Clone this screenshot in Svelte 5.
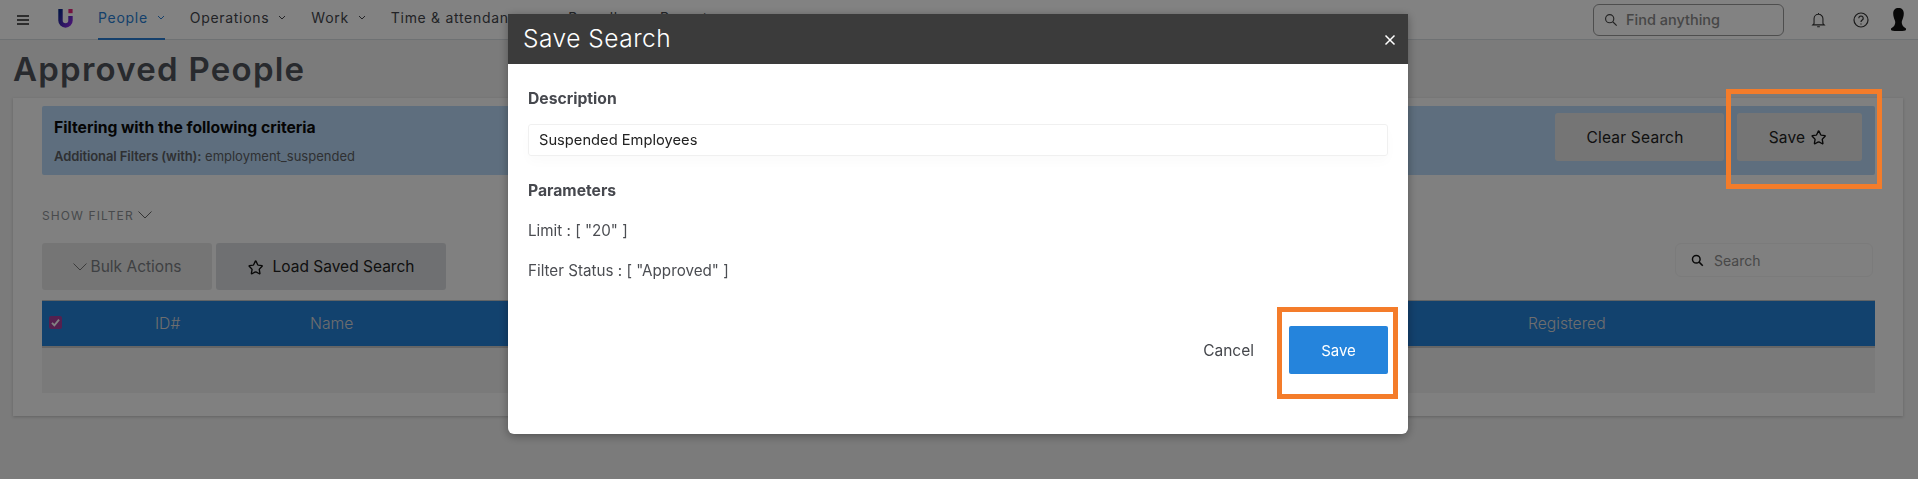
<script>
  const nav = [
    { label: 'People', active: true },
    { label: 'Operations' },
    { label: 'Work' },
    { label: 'Time & attendance' },
    { label: 'Payroll' },
    { label: 'Reports' }
  ]
  const params = ['Limit : [ "20" ]', 'Filter Status : [ "Approved" ]']
  const star = 'M12 3.2l2.5 5.3c.2.3.4.5.8.6l5.6.8c.5.1.7.7.3 1l-4 4c-.3.2-.4.6-.3.9l1 5.7c.1.5-.4.9-.9.6l-5-2.7c-.3-.2-.7-.2-1 0l-5 2.7c-.5.3-1-.1-.9-.6l1-5.7c.1-.3 0-.7-.3-.9l-4-4c-.4-.3-.2-.9.3-1l5.6-.8c.4-.1.6-.3.8-.6l2.5-5.3c.2-.5.8-.5 1 0z'
</script>

<div class="page">
  <header class="topbar">
    <svg class="burger" viewBox="0 0 12 10"><path d="M0 1h12M0 5h12M0 9h12" /></svg>
    <svg class="logo" viewBox="0 0 15 19">
      <defs>
        <linearGradient id="u" x1="0" y1="0" x2="1" y2="1">
          <stop offset="0" stop-color="#0a2a8c" />
          <stop offset="1" stop-color="#8a2be2" />
        </linearGradient>
      </defs>
      <path d="M2.5 0v11.5a5 5 0 0 0 10 0V7" fill="none" stroke="url(#u)" stroke-width="4.4" />
      <rect x="10.4" y="0" width="4.2" height="4.2" fill="#e5267c" />
    </svg>
    <nav>
      {#each nav as item}
        <a href="#top" class:active={item.active}>
          {item.label}
          <svg viewBox="0 0 8 5"><path d="M1 1l3 3 3-3" /></svg>
        </a>
      {/each}
    </nav>
    <div class="find">
      <svg viewBox="0 0 16 16"><circle cx="6.5" cy="6.5" r="4.7" /><path d="M10 10l4.5 4.5" /></svg>
      <span>Find anything</span>
    </div>
    <svg class="tool" viewBox="0 0 16 18">
      <path d="M3 13V7.5a5 5 0 0 1 10 0V13l1.5 1.5h-13zM6.5 16.5h3M8 1v1.5" />
    </svg>
    <svg class="tool help" viewBox="0 0 16 16">
      <circle cx="8" cy="8" r="7" />
      <path d="M5.8 6.2a2.2 2.2 0 1 1 3.4 1.9c-.8.5-1.2 1-1.2 1.9M8 11.6v1" />
    </svg>
    <svg class="avatar" viewBox="0 0 15 23">
      <path d="M7.5 0c3.400 0 5.300 2 5.300 5.500 0 2.700-.9 5-1.700 6.900-.6 1.500-.4 3.300.4 4.900.7 1.400 2.100 2.200 3.500 3.200.5.400.2 1.500-.6 1.900-1.700.5-4 .6-6.900.6s-5.200-.1-6.900-.6c-.8-.4-1.100-1.500-.6-1.900 1.400-1 2.800-1.800 3.500-3.200.8-1.600 1-3.400.4-4.900-.8-1.900-1.700-4.200-1.700-6.900C2.200 2 4.100 0 7.500 0z" />
    </svg>
  </header>

  <h1>Approved People</h1>

  <section class="card">
    <div class="alert">
      <div class="alert-text">
        <h2>Filtering with the following criteria</h2>
        <p><b>Additional Filters (with):</b> employment_suspended</p>
      </div>
      <button class="grey clear">Clear Search</button>
      <button class="grey save-top">
        Save
        <svg class="star" viewBox="0 0 24 24"><path d={star} /></svg>
      </button>
    </div>

    <div class="show-filter">
      SHOW FILTER
      <svg viewBox="0 0 14 8"><path d="M.5.5L7 7 13.500.5" /></svg>
    </div>

    <div class="actions">
      <button class="grey bulk">
        <svg viewBox="0 0 14 8"><path d="M.5.5L7 7 13.500.5" /></svg>
        Bulk Actions
      </button>
      <button class="grey load">
        <svg class="star" viewBox="0 0 24 24"><path d={star} /></svg>
        Load Saved Search
      </button>
      <div class="table-search">
        <svg viewBox="0 0 16 16"><circle cx="6.5" cy="6.5" r="4.7" /><path d="M10 10l4.500 4.500" /></svg>
        <span>Search</span>
      </div>
    </div>

    <div class="thead">
      <span class="check">
        <svg viewBox="0 0 14 14"><path d="M3.200 7.300l2.600 2.700 5-6" /></svg>
      </span>
      <span>ID#</span>
      <span>Name</span>
      <span>Registered</span>
    </div>
    <div class="empty-row"></div>
  </section>
</div>

<div class="backdrop"></div>

<div class="dialog">
  <div class="dialog-head">
    <h3>Save Search</h3>
    <svg viewBox="0 0 12 12"><path d="M1.500 1.500l9 9M10.500 1.500l-9 9" /></svg>
  </div>
  <div class="dialog-body">
    <h4>Description</h4>
    <div class="input">Suspended Employees</div>
    <h4 class="params">Parameters</h4>
    {#each params as line}
      <p>{line}</p>
    {/each}
    <div class="dialog-foot">
      <span class="cancel">Cancel</span>
      <button class="primary">Save</button>
    </div>
  </div>
</div>

<div class="mark mark-top"></div>
<div class="mark mark-dialog"></div>

<style>
  :global(body) {
    margin: 0;
    background: #f1f1f1;
    font-family: Inter, "Open Sans", sans-serif;
    overflow: hidden;
  }
  .page {
    height: 479px;
    color: #3f4248;
  }
  .topbar {
    display: flex;
    align-items: center;
    height: 39px;
    background: #fff;
    border-bottom: 1px solid #d8dde2;
  }
  .burger {
    width: 12px;
    height: 10px;
    margin-left: 17px;
    fill: none;
    stroke: #222;
    stroke-width: 1.500;
  }
  .logo {
    width: 15px;
    height: 19px;
    margin-left: 29px;
    margin-top: -2px;
  }
  nav {
    display: flex;
    align-self: stretch;
    gap: 25px;
    margin-left: 25px;
  }
  nav a {
    display: flex;
    align-items: center;
    gap: 9px;
    padding-bottom: 3px;
    font-size: 14px;
    letter-spacing: 0.7px;
    font-weight: 400;
    color: #43464c;
    text-decoration: none;
    white-space: nowrap;
    border-bottom: 2px solid transparent;
    box-sizing: border-box;
    height: 40px;
  }
  nav a.active {
    color: #2a7fd4;
    border-bottom-color: #2a7fd4;
  }
  nav a svg {
    width: 8px;
    height: 5px;
    fill: none;
    stroke: currentColor;
    stroke-width: 1;
  }
  .find {
    display: flex;
    align-items: center;
    gap: 8px;
    box-sizing: border-box;
    width: 191px;
    height: 32px;
    margin-left: auto;
    padding-left: 10px;
    border: 1px solid #9a9a9a;
    border-radius: 6px;
    font-size: 14.500px;
    font-weight: 500;
    color: #8a8a8a;
  }
  .find svg {
    width: 14px;
    height: 14px;
    fill: none;
    stroke: #444;
    stroke-width: 1.300;
  }
  .tool {
    width: 15px;
    height: 16px;
    margin-left: 27px;
    fill: none;
    stroke: #333;
    stroke-width: 1.200;
  }
  .help {
    width: 16px;
    height: 16px;
    margin-left: 27px;
  }
  .avatar {
    width: 15px;
    height: 23px;
    margin-left: 22px;
    margin-right: 12px;
    fill: #111;
  }
  h1 {
    margin: 0;
    padding: 10px 0 0 13px;
    height: 48px;
    box-sizing: border-box;
    font-size: 33px;
    line-height: 38px;
    font-weight: 600;
    letter-spacing: 1.250px;
    color: #4f535a;
  }
  .card {
    box-sizing: border-box;
    width: 1890px;
    height: 318px;
    margin: 10px 0 0 13px;
    padding: 8px 28px 0 29px;
    background: #fbfbfb;
    box-shadow: 0 1px 3px rgba(0, 0, 0, 0.2);
  }
  .alert {
    display: flex;
    align-items: flex-start;
    gap: 13px;
    box-sizing: border-box;
    height: 69px;
    padding: 7px 13px 0 12px;
    background: #b8d8f7;
    border-radius: 2px;
  }
  .alert-text {
    flex: 1;
    padding-top: 5px;
  }
  h2 {
    margin: 0 0 10px;
    font-size: 15.700px;
    line-height: 20px;
    font-weight: 700;
    color: #0a0a0a;
  }
  .alert p {
    margin: 0;
    font-size: 13px;
    line-height: 16px;
    color: #5c5f64;
  }
  .alert b {
    font-weight: 600;
    letter-spacing: -0.1px;
  }
  button {
    font: inherit;
    border: 0;
    cursor: pointer;
  }
  .grey {
    display: flex;
    align-items: center;
    justify-content: center;
    height: 48px;
    background: #e6e6e6;
    color: #222;
    font-size: 15.500px;
    border-radius: 3px;
  }
  .alert .clear {
    width: 169px;
    padding-right: 15px;
    letter-spacing: 0.2px;
  }
  .alert .save-top {
    width: 125px;
    gap: 6px;
    padding-right: 9px;
    letter-spacing: 0.2px;
  }
  .star {
    width: 16px;
    height: 16px;
    fill: none;
    stroke: #111;
    stroke-width: 2;
  }
  .show-filter {
    display: flex;
    align-items: center;
    gap: 4px;
    margin-top: 32px;
    height: 16px;
    font-size: 12px;
    letter-spacing: 1.100px;
    color: #8d9296;
  }
  .show-filter svg {
    width: 14px;
    height: 8px;
    fill: none;
    stroke: #666;
    stroke-width: 1;
  }
  .actions {
    display: flex;
    gap: 4px;
    margin-top: 20px;
    height: 47px;
    margin-bottom: 10px;
  }
  .actions .grey {
    height: 47px;
    font-size: 15.500px;
  }
  .bulk {
    width: 170px;
    gap: 4px;
    color: #7b7e83 !important;
  }
  .bulk svg {
    width: 14px;
    height: 8px;
    fill: none;
    stroke: #777;
    stroke-width: 1;
  }
  .load {
    width: 230px;
    gap: 9px;
    background: #dadcdf !important;
  }
  .table-search {
    display: flex;
    align-items: center;
    gap: 10px;
    box-sizing: border-box;
    width: 198px;
    height: 34px;
    margin-left: auto;
    margin-right: 2px;
    padding-left: 15px;
    border: 1px solid #f2f2f2;
    border-radius: 6px;
    font-size: 14px;
    color: #8d8d8d;
  }
  .table-search svg {
    width: 13px;
    height: 13px;
    fill: none;
    stroke: #111;
    stroke-width: 1.800;
  }
  .thead {
    display: grid;
    grid-template-columns: 113px 155px 1fr 347px;
    align-items: center;
    height: 45px;
    box-sizing: content-box;
    background: #2581d8;
    border-top: 1px solid #bfc4c8;
    border-bottom: 2px solid #c8c8c8;
    font-size: 15.700px;
    font-weight: 300;
    color: #d8d8d8;
  }
  .check {
    display: block;
    width: 13px;
    height: 13px;
    margin: -3px 0 0 7px;
    background: #a8409c;
    border-radius: 2px;
  }
  .check svg {
    display: block;
    fill: none;
    stroke: #fff;
    stroke-width: 2;
  }
  .empty-row {
    height: 45px;
    background: #f0f0f0;
  }

  .backdrop {
    position: fixed;
    inset: 0;
    background: rgba(0, 0, 0, 0.49);
  }
  .dialog {
    position: fixed;
    left: 508px;
    top: 14px;
    width: 900px;
    height: 420px;
    background: #fff;
    border-radius: 0 0 6px 6px;
    box-shadow: 0 2px 10px rgba(0, 0, 0, 0.35);
    overflow: hidden;
  }
  .dialog-head {
    display: flex;
    align-items: center;
    justify-content: space-between;
    box-sizing: border-box;
    height: 50px;
    padding: 0 12px 2px 15px;
    background: #3b3b3b;
    color: #fff;
  }
  h3 {
    margin: 0;
    font-size: 24.500px;
    font-weight: 300;
    letter-spacing: 0.5px;
  }
  .dialog-head svg {
    width: 12px;
    height: 12px;
    margin-top: 4px;
    fill: none;
    stroke: #fff;
    stroke-width: 1.500;
  }
  .dialog-body {
    padding: 25px 20px 0 20px;
    color: #4b4d52;
  }
  h4 {
    margin: 0;
    font-size: 15.700px;
    line-height: 20px;
    font-weight: 700;
    color: #46484e;
  }
  .input {
    box-sizing: border-box;
    height: 32px;
    margin-top: 15px;
    padding-left: 10px;
    border: 1px solid #f0f0f0;
    border-radius: 3px;
    font-size: 14.700px;
    line-height: 30px;
    color: #222;
    box-shadow: 0 6px 12px rgba(0, 0, 0, 0.02);
  }
  .params {
    margin-top: 25px;
  }
  .dialog-body p {
    margin: 0;
    height: 40px;
    font-size: 15.200px;
    line-height: 20px;
    padding-top: 20px;
    box-sizing: border-box;
  }
  .dialog-foot {
    display: flex;
    align-items: center;
    justify-content: flex-end;
    gap: 35px;
    margin-top: 45px;
  }
  .cancel {
    font-size: 15.500px;
    color: #45474c;
  }
  .primary {
    width: 99px;
    height: 48px;
    background: #2584dc;
    color: #fff;
    font-size: 15px;
    border-radius: 2px;
  }
  .mark {
    position: fixed;
    box-sizing: border-box;
    border: 5px solid #f47c2a;
  }
  .mark-top {
    left: 1726px;
    top: 89px;
    width: 156px;
    height: 100px;
  }
  .mark-dialog {
    left: 1277px;
    top: 307px;
    width: 121px;
    height: 92px;
  }
</style>
